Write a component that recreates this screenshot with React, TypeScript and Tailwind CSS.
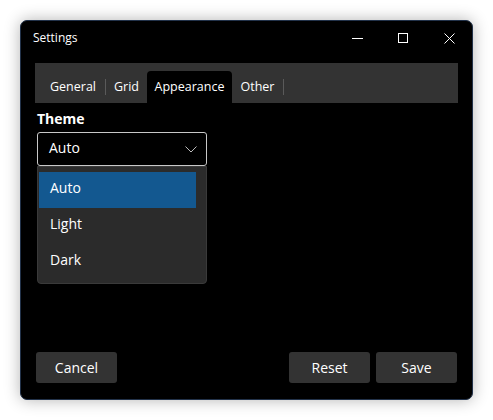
import React from 'react';

const font = { fontFamily: '"Open Sans", "Noto Sans", sans-serif' };

function Tab({ label, width, active }: { label: string; width: string; active?: boolean }) {
  return (
    <div
      className={`${width} h-[32px] flex items-center justify-center text-[12.5px] text-white ${
        active ? 'bg-black rounded-t-[4px]' : ''
      }`}
    >
      {label}
    </div>
  );
}

function Sep() {
  return <div className="w-px h-[16px] mb-[8px] bg-[#5a5a5a] self-end" />;
}

function Button({ label }: { label: string }) {
  return (
    <button className="w-[81px] h-[31px] rounded-[3px] bg-[#333333] text-[14px] text-white flex items-center justify-center">
      {label}
    </button>
  );
}

export default function App() {
  return (
    <div className="w-[493px] h-[420px] bg-white pt-[20px] pl-[20px]" style={font}>
      <div className="w-[453px] h-[380px] bg-black border border-[#22324a] rounded-[7px] shadow-[0_0_16px_rgba(0,0,0,0.3)] flex flex-col">
        {/* title bar */}
        <div className="h-[34px] flex items-center">
          <div className="pl-[12px] text-[12px] text-white flex-1">Settings</div>
          <div className="w-[46px] h-full flex items-center justify-center">
            <svg width="11" height="11" viewBox="0 0 11 11">
              <path d="M0 5.5H11" stroke="white" strokeWidth="1" />
            </svg>
          </div>
          <div className="w-[46px] h-full flex items-center justify-center">
            <svg width="10" height="10" viewBox="0 0 10 10">
              <rect x="0.5" y="0.5" width="9" height="9" fill="none" stroke="white" strokeWidth="1" />
            </svg>
          </div>
          <div className="w-[46px] h-full flex items-center justify-center">
            <svg width="11" height="11" viewBox="0 0 11 11">
              <path d="M0.5 0.5L10.5 10.5M10.5 0.5L0.5 10.5" stroke="white" strokeWidth="1" />
            </svg>
          </div>
        </div>

        <div className="flex-1 flex flex-col px-[14px]">
          {/* tabs */}
          <div className="mt-[8px] h-[40px] bg-[#333333] flex items-end pl-[6px]">
            <Tab label="General" width="w-[64px]" />
            <Sep />
            <Tab label="Grid" width="w-[41px]" />
            <Tab label="Appearance" width="w-[85px]" active />
            <Tab label="Other" width="w-[51px]" />
            <Sep />
          </div>

          <div className="mt-[5px] ml-[2px] h-[20px] flex items-center text-[14px] font-bold text-white">
            Theme
          </div>

          {/* combo box */}
          <div className="relative mt-[4px] ml-[2px] w-[170px]">
            <div className="h-[34px] border border-[#c8c8c8] rounded-[3px] flex items-center justify-between pl-[11px] pr-[9px] text-[14px] text-white">
              <span className="pb-[3px]">Auto</span>
              <svg width="12" height="7" viewBox="0 0 12 7">
                <path d="M0.5 0.5L6 6L11.5 0.5" fill="none" stroke="#bdbdbd" strokeWidth="1" />
              </svg>
            </div>
            <div className="absolute left-0 top-[34px] w-[170px] h-[118px] bg-[#2b2b2b] border border-[#3a3a3a] rounded-b-[4px] pt-[5px] pl-px text-[14px] text-white">
              <div className="w-[157px] h-[36px] bg-[#135890] flex items-center pl-[11px] pb-[5px]">Auto</div>
              <div className="h-[36px] flex items-center pl-[11px] pb-[5px]">Light</div>
              <div className="h-[36px] flex items-center pl-[11px] pb-[5px]">Dark</div>
            </div>
          </div>

          <div className="flex-1" />

          {/* buttons */}
          <div className="flex pb-[16px] pl-px pr-[1px]">
            <Button label="Cancel" />
            <div className="flex-1" />
            <div className="flex gap-[6px]">
              <Button label="Reset" />
              <Button label="Save" />
            </div>
          </div>
        </div>
      </div>
    </div>
  );
}
